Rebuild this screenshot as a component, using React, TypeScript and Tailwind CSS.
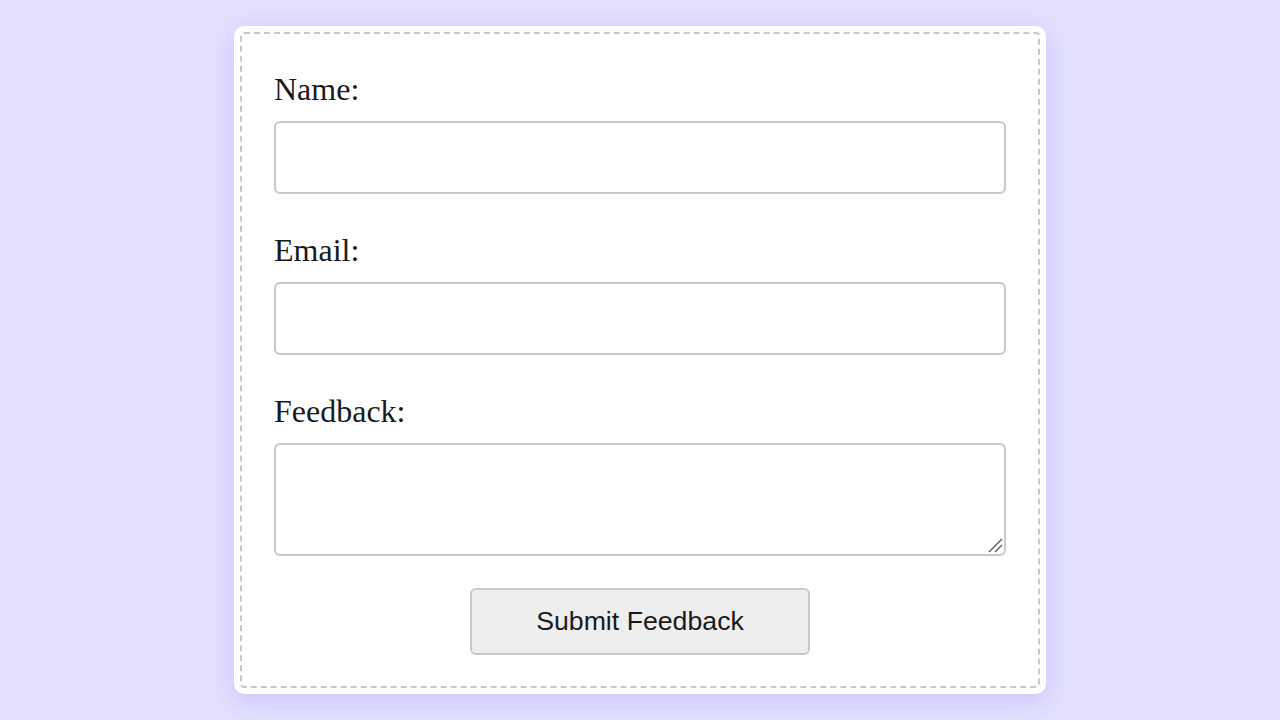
import React from 'react';

const fieldLabel = "block pt-[2px] text-[32px] leading-[37px] text-[#1a1a1a] font-['Liberation_Serif',serif]";
const fieldBox =
  "block w-full rounded-[6px] border-2 border-[#c8c8c8] bg-white outline-none font-['Liberation_Sans',sans-serif] text-[20px]";

const App: React.FC = () => {
  return (
    <div className="flex h-screen w-full items-center justify-center bg-[#e3e0ff]">
      <div className="w-[812px] rounded-[10px] bg-white p-[6px] shadow-[0_6px_26px_rgba(150,130,255,0.32)]">
        <form
          className="rounded-[4px] border-2 border-dashed border-[#c8c8c8] px-[32px] pt-[35px] pb-[31px]"
          onSubmit={(e) => e.preventDefault()}
        >
          <label className={fieldLabel}>Name:</label>
          <input type="text" className={`${fieldBox} mt-[13px] h-[73px]`} />

          <label className={`${fieldLabel} mt-[36px]`}>Email:</label>
          <input type="email" className={`${fieldBox} mt-[13px] h-[73px]`} />

          <label className={`${fieldLabel} mt-[36px]`}>Feedback:</label>
          <div className="relative mt-[13px]">
            <textarea className={`${fieldBox} h-[113px] resize-none`} />
            {/* resize grip */}
            <svg
              className="pointer-events-none absolute right-[3px] bottom-[3px] h-[16px] w-[16px]"
              viewBox="0 0 16 16"
              fill="none"
              stroke="#555"
              strokeWidth="1.3"
            >
              <path d="M2 15 L15 2" />
              <path d="M8 15 L15 8" />
            </svg>
          </div>

          <div className="mt-[32px] flex justify-center">
            <button
              type="submit"
              className="h-[67px] w-[340px] rounded-[6px] border-2 border-[#c8c8c8] bg-[#eeeeee] text-[26.7px] text-[#1a1a1a] font-['Liberation_Sans',sans-serif]"
            >
              Submit Feedback
            </button>
          </div>
        </form>
      </div>
    </div>
  );
};

export default App;
